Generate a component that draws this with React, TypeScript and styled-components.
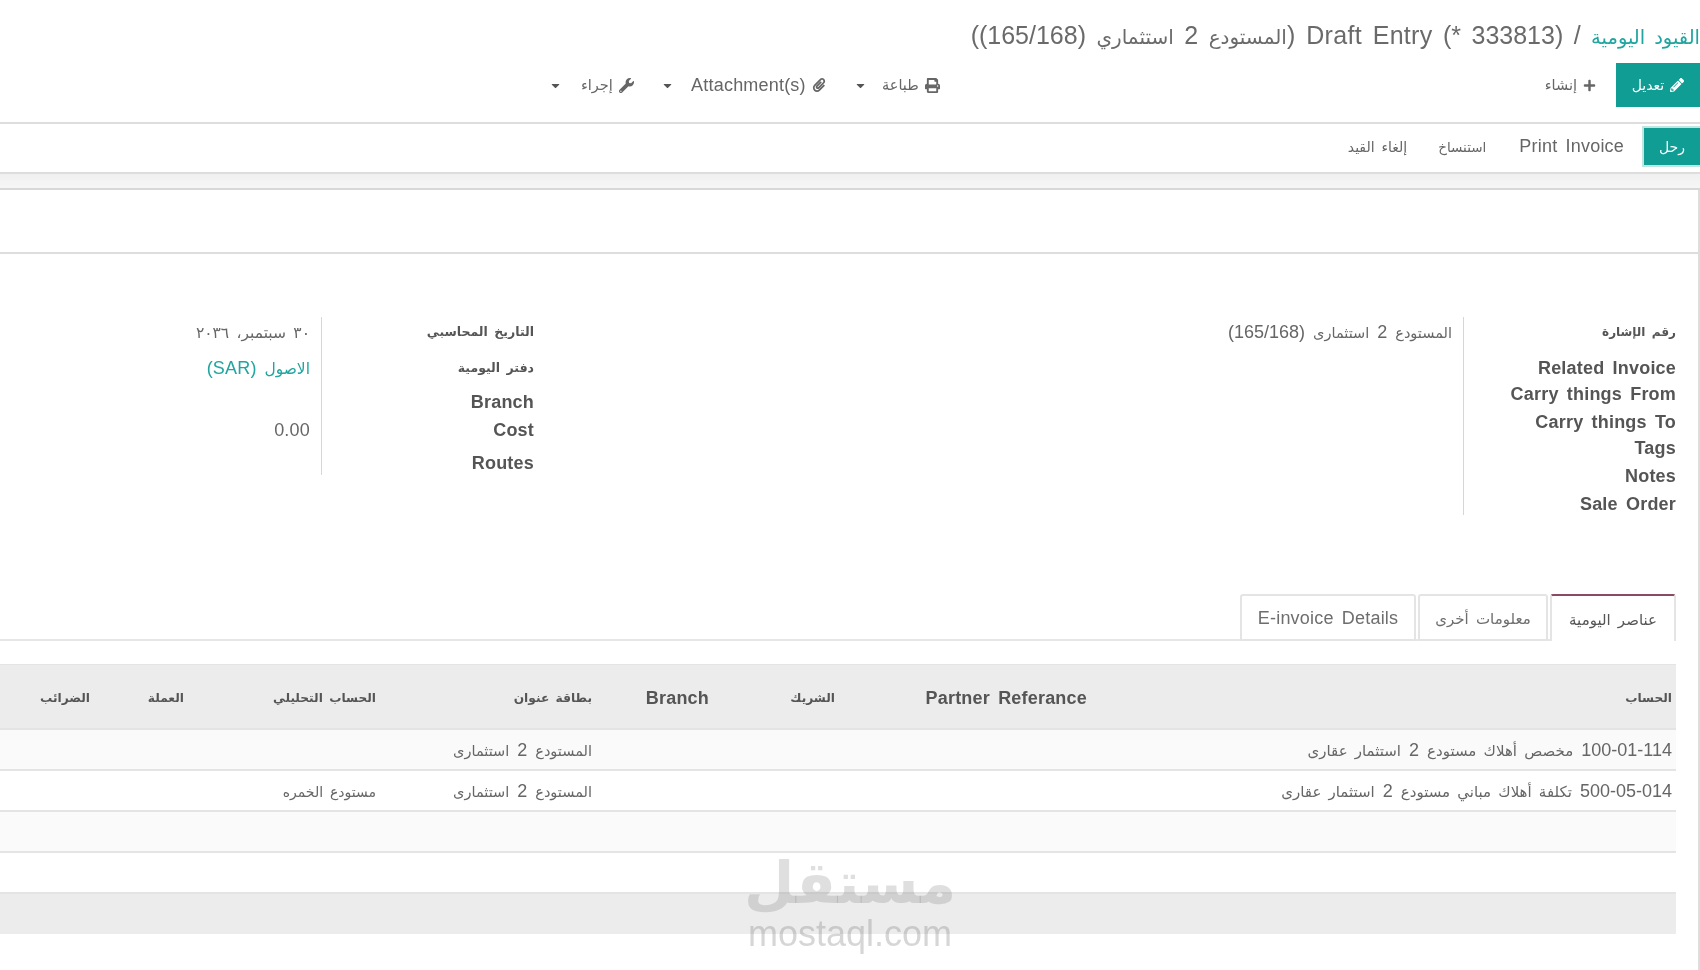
import React from "react";
import styled, { createGlobalStyle } from "styled-components";
import { FaPencilAlt, FaPlus, FaPrint, FaPaperclip, FaWrench, FaCaretDown } from "react-icons/fa";

const Global = createGlobalStyle`
  html, body { margin: 0; padding: 0; background: #fff; }
  * { box-sizing: border-box; }
`;

const Page = styled.div`
  direction: rtl;
  width: 1700px;
  height: 970px;
  overflow: hidden;
  position: relative;
  background: #fff;
  color: #5a5a5a;
  font-family: "Liberation Sans", "DejaVu Sans", sans-serif;
  font-size: 18px;
  word-spacing: 3px;
  letter-spacing: 0.2px;
  filter: blur(0.35px);
`;

const Ar = styled.span<{ $s: number }>`
  font-size: ${(p) => p.$s}px;
`;

const RaisedAr = styled(Ar)`
  vertical-align: 2px;
`;

const Header = styled.header`
  padding-top: 20px;
  height: 122px;
`;

const Title = styled.div`
  height: 30px;
  line-height: 30px;
  font-size: 25px;
  white-space: nowrap;
  color: #6a6a6a;
  letter-spacing: 0.3px;
  word-spacing: 3.5px;
`;

const Crumb = styled.span`
  color: #21a5a0;
  font-size: 19.5px;
`;

const Toolbar = styled.div`
  display: flex;
  align-items: center;
  margin-top: 13px;
  height: 44px;
`;

const PrimaryButton = styled.button`
  display: flex;
  align-items: center;
  justify-content: center;
  gap: 6px;
  width: 84px;
  height: 44px;
  padding: 0;
  border: 0;
  background: #0f9d94;
  color: #fff;
  font: inherit;
  font-size: 14px;
`;

const ToolItem = styled.span<{ $mr?: number; $w?: number }>`
  display: inline-flex;
  align-items: center;
  gap: 6px;
  color: #666;
  font-size: 14.5px;
  white-space: nowrap;
  margin-right: ${(p) => p.$mr ?? 0}px;
  width: ${(p) => (p.$w ? `${p.$w}px` : "auto")};
`;

const ToolLabel = styled.span`
  font-size: 18px;
`;

const Caret = styled(FaCaretDown)`
  font-size: 13px;
  margin-right: auto;
  color: #555;
`;

const StatusBar = styled.div`
  border-top: 2px solid #ddd;
  height: 50px;
  display: flex;
  align-items: center;
  padding-bottom: 3px;
`;

const ConfirmButton = styled.button`
  width: 58px;
  height: 41px;
  padding: 0;
  border: 2px solid #bfe6e3;
  border-right: 0;
  background: #0f9d94;
  color: #fff;
  font: inherit;
  font-size: 14px;
`;

const StatusAction = styled.span<{ $mr: number; $s: number }>`
  margin-right: ${(p) => p.$mr}px;
  font-size: ${(p) => p.$s}px;
  color: #666;
  white-space: nowrap;
`;

const Band = styled.div`
  height: 18px;
  border-top: 2px solid #ddd;
  border-bottom: 2px solid #d8d8d8;
  background: linear-gradient(#f0f0f0, #f6f6f6);
`;

const Sheet = styled.main`
  border-right: 2px solid #ddd;
  height: 781px;
`;

const SheetHead = styled.div`
  height: 64px;
  border-bottom: 2px solid #ddd;
`;

const Groups = styled.section`
  display: flex;
  gap: 24px;
  margin-top: 63px;
  padding-right: 22px;
`;

const Group = styled.div<{ $w: number }>`
  display: flex;
  flex: none;
  width: ${(p) => p.$w}px;
  align-self: flex-start;
`;

const LabelCol = styled.div`
  width: 213px;
  border-left: 1px solid #d6d6d6;
  flex: none;
`;

const ValueCol = styled.div`
  padding-right: 11px;
  flex: 1;
`;

const FormRow = styled.div<{ $h: number }>`
  height: ${(p) => p.$h}px;
  padding-top: 4px;
  line-height: 22px;
  white-space: nowrap;
`;

const Label = styled(FormRow)`
  font-weight: 700;
  color: #555;
`;

const Value = styled(FormRow)<{ $link?: boolean }>`
  color: ${(p) => (p.$link ? "#21a5a0" : "#666")};
`;

const Tabs = styled.nav`
  display: flex;
  gap: 2px;
  margin-top: 79px;
  margin-right: 22px;
  height: 47px;
  border-bottom: 2px solid #e6e6e6;
`;

const Tab = styled.div<{ $w: number; $active?: boolean }>`
  width: ${(p) => p.$w}px;
  height: 47px;
  padding-top: 2px;
  display: flex;
  align-items: center;
  justify-content: center;
  color: ${(p) => (p.$active ? "#555" : "#6e6e6e")};
  background: #fff;
  border: 2px solid #e4e4e4;
  border-bottom: ${(p) => (p.$active ? "0" : "2px solid #e4e4e4")};
  border-top-color: ${(p) => (p.$active ? "#8a4a66" : "#e4e4e4")};
  border-radius: 3px 3px 0 0;
`;

const Table = styled.table`
  width: 1676px;
  margin-top: 23px;
  margin-right: 22px;
  table-layout: fixed;
  border-collapse: separate;
  border-spacing: 0;
`;

const Column = styled.col<{ $w: number }>`
  width: ${(p) => p.$w}px;
`;

const HeadCell = styled.th`
  height: 66px;
  background: #ececec;
  border-top: 1px solid #e4e4e4;
  border-bottom: 2px solid #e4e4e4;
  padding: 3px 4px 0 0;
  text-align: right;
  color: #555;
  font-weight: 700;
  white-space: nowrap;
`;

const Row = styled.tr<{ $odd?: boolean }>`
  background: ${(p) => (p.$odd ? "#fafafa" : "#fff")};
`;

const Cell = styled.td`
  height: 41px;
  border-bottom: 2px solid #e4e4e4;
  padding: 2px 4px 0 0;
  text-align: right;
  color: #666;
  white-space: nowrap;
`;

const FootCell = styled.td`
  height: 40px;
  background: #ececec;
`;

const Watermark = styled.div`
  position: absolute;
  left: 740px;
  top: 848px;
  width: 220px;
  text-align: center;
  pointer-events: none;
`;

const MarkLogo = styled.div`
  font-family: "DejaVu Sans", sans-serif;
  font-weight: 700;
  font-size: 58px;
  line-height: 70px;
  word-spacing: 0;
  letter-spacing: 0;
  color: rgba(120, 120, 120, 0.24);
`;

const MarkUrl = styled.div`
  direction: ltr;
  font-family: "Liberation Sans", sans-serif;
  font-size: 36px;
  line-height: 32px;
  letter-spacing: 0;
  color: rgba(120, 120, 120, 0.3);
`;

const cols = [585, 252, 126, 117, 216, 192, 94, 94];
const heads: [string, boolean][] = [
  ["الحساب", true],
  ["Partner Referance", false],
  ["الشريك", true],
  ["Branch", false],
  ["بطاقة عنوان", true],
  ["الحساب التحليلي", true],
  ["العملة", true],
  ["الضرائب", true],
];

const rows = [
  { code: "100-01-114", before: "مخصص أهلاك مستودع", after: "استثمار عقارى", label: true, analytic: "" },
  { code: "500-05-014", before: "تكلفة أهلاك مباني مستودع", after: "استثمار عقارى", label: true, analytic: "مستودع الخمره" },
  { code: "", before: "", after: "", label: false, analytic: "" },
  { code: "", before: "", after: "", label: false, analytic: "" },
];

export default function App() {
  return (
    <Page>
      <Global />
      <Header>
        <Title>
          <Crumb>القيود اليومية</Crumb> / (333813 *) Draft Entry (<Ar $s={20}>المستودع</Ar> 2{" "}
          <Ar $s={20}>استثماري</Ar> (165/168))
        </Title>
        <Toolbar>
          <PrimaryButton>
            <FaPencilAlt size={14} />
            تعديل
          </PrimaryButton>
          <ToolItem $mr={20}>
            <FaPlus size={13} />
            إنشاء
          </ToolItem>
          <ToolItem $mr={605} $w={86}>
            <FaPrint size={15} />
            طباعة
            <Caret />
          </ToolItem>
          <ToolItem $mr={28} $w={165}>
            <FaPaperclip size={14} />
            <ToolLabel>Attachment(s)</ToolLabel>
            <Caret />
          </ToolItem>
          <ToolItem $mr={27} $w={85}>
            <FaWrench size={15} />
            إجراء
            <Caret />
          </ToolItem>
        </Toolbar>
      </Header>
      <StatusBar>
        <ConfirmButton>رحل</ConfirmButton>
        <StatusAction $mr={18} $s={18}>Print Invoice</StatusAction>
        <StatusAction $mr={33} $s={13.5}>استنساخ</StatusAction>
        <StatusAction $mr={31} $s={14}>إلغاء القيد</StatusAction>
      </StatusBar>
      <Band />
      <Sheet>
        <SheetHead />
        <Groups>
          <Group $w={1118}>
            <LabelCol>
              <Label $h={36}><RaisedAr $s={12}>رقم الإشارة</RaisedAr></Label>
              <Label $h={26}>Related Invoice</Label>
              <Label $h={28}>Carry things From</Label>
              <Label $h={26}>Carry things To</Label>
              <Label $h={28}>Tags</Label>
              <Label $h={28}>Notes</Label>
              <Label $h={26}>Sale Order</Label>
            </LabelCol>
            <ValueCol>
              <Value $h={36}>
                <Ar $s={14.5}>المستودع</Ar> 2 <Ar $s={14.5}>استثمارى</Ar> (165/168)
              </Value>
            </ValueCol>
          </Group>
          <Group $w={536}>
            <LabelCol>
              <Label $h={36}><RaisedAr $s={12.5}>التاريخ المحاسبي</RaisedAr></Label>
              <Label $h={34}><RaisedAr $s={12.5}>دفتر اليومية</RaisedAr></Label>
              <Label $h={28}>Branch</Label>
              <Label $h={33}>Cost</Label>
              <Label $h={27}>Routes</Label>
            </LabelCol>
            <ValueCol>
              <Value $h={36}><Ar $s={15.5}>٣٠ سبتمبر، ٢٠٣٦</Ar></Value>
              <Value $h={62} $link>
                <Ar $s={15.5}>الاصول</Ar> (SAR)
              </Value>
              <Value $h={33}>0.00</Value>
            </ValueCol>
          </Group>
        </Groups>
        <Tabs>
          <Tab $w={126} $active><Ar $s={15}>عناصر اليومية</Ar></Tab>
          <Tab $w={130}><Ar $s={15}>معلومات أخرى</Ar></Tab>
          <Tab $w={176}>E-invoice Details</Tab>
        </Tabs>
        <Table>
          <colgroup>
            {cols.map((w, i) => (
              <Column key={i} $w={w} />
            ))}
          </colgroup>
          <thead>
            <tr>
              {heads.map(([h, ar]) => (
                <HeadCell key={h}>{ar ? <RaisedAr $s={12.2}>{h}</RaisedAr> : h}</HeadCell>
              ))}
            </tr>
          </thead>
          <tbody>
            {rows.map((r, i) => (
              <Row key={i} $odd={i % 2 === 0}>
                <Cell>
                  {r.code && (
                    <>
                      {r.code} <Ar $s={15}>{r.before}</Ar> 2 <Ar $s={15}>{r.after}</Ar>
                    </>
                  )}
                </Cell>
                <Cell />
                <Cell />
                <Cell />
                <Cell>
                  {r.label && (
                    <>
                      <Ar $s={14.5}>المستودع</Ar> 2 <Ar $s={14.5}>استثمارى</Ar>
                    </>
                  )}
                </Cell>
                <Cell>
                  <Ar $s={14}>{r.analytic}</Ar>
                </Cell>
                <Cell />
                <Cell />
              </Row>
            ))}
            <tr>
              <FootCell colSpan={8} />
            </tr>
          </tbody>
        </Table>
      </Sheet>
      <Watermark>
        <MarkLogo>مستقل</MarkLogo>
        <MarkUrl>mostaql.com</MarkUrl>
      </Watermark>
    </Page>
  );
}
